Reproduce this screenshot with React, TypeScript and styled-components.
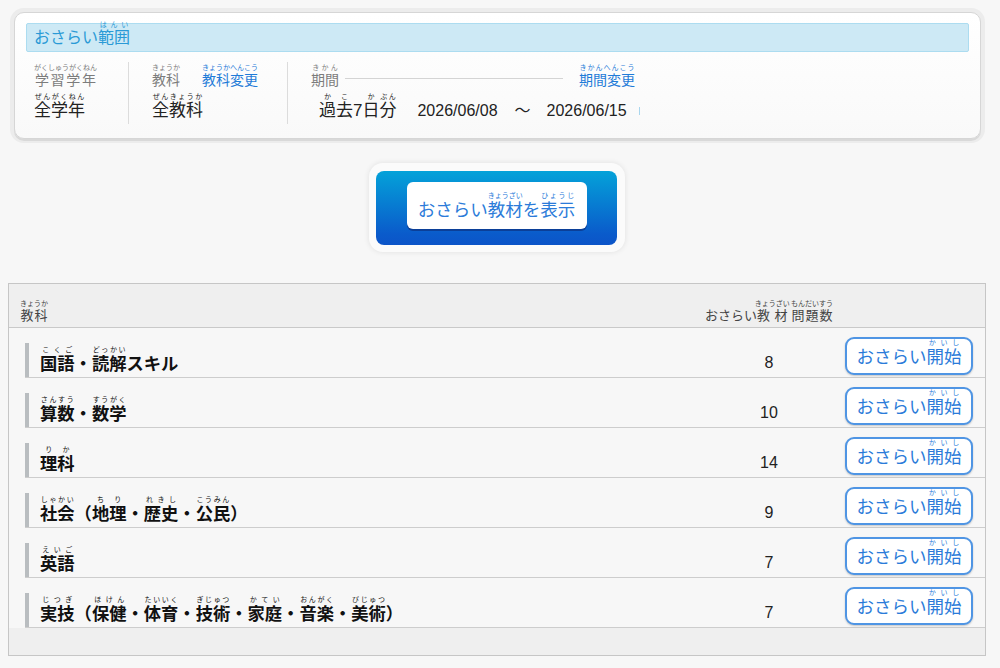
import React from 'react';
import styled, { createGlobalStyle } from 'styled-components';

const GlobalStyle = createGlobalStyle`
  html, body {
    margin: 0;
    padding: 0;
    background: #f7f7f7;
  }
  body {
    font-family: "Liberation Sans", "Noto Sans CJK JP", sans-serif;
    color: #333;
  }
  ruby {
    line-height: 1;
  }
  rt {
    font-size: 7px;
    font-weight: normal;
    line-height: 1;
    padding-bottom: 1px;
  }
`;

const Page = styled.div`
  padding: 8px 14px 11px 8px;
`;

const RangePanel = styled.section`
  margin: 0 1px 0 2px;
  padding: 4px 4px;
  background: #ececec;
  border-radius: 14px;
`;

const RangeCard = styled.div`
  background: linear-gradient(#ffffff, #f9f9f9);
  border: 1px solid #d6d6d6;
  border-radius: 10px;
  box-shadow: 0 2px 0 #d9d9d9;
  padding: 10px 11px 14px 11px;
`;

const RangeTitle = styled.h2`
  margin: 0;
  height: 29px;
  box-sizing: border-box;
  display: flex;
  align-items: flex-end;
  padding: 0 0 5px 7px;
  background: #cde9f5;
  border: 1px solid #acdcf0;
  border-radius: 2px;
  color: #2a9ad6;
  font-size: 16px;
  font-weight: normal;
  line-height: 1;
`;

const InfoRow = styled.div`
  display: flex;
  margin-top: 10px;
`;

const InfoCol = styled.div<{ $w: number; $pl: number; $last?: boolean }>`
  width: ${({ $w }) => $w}px;
  box-sizing: border-box;
  padding-left: ${({ $pl }) => $pl}px;
  border-right: ${({ $last }) => ($last ? 'none' : '1px solid #dcdcdc')};
  height: 62px;
  display: flex;
  flex-direction: column;
`;

const LabelLine = styled.div<{ $w?: number }>`
  height: 25px;
  display: flex;
  align-items: flex-end;
  width: ${({ $w }) => ($w ? `${$w}px` : 'auto')};
`;

const Label = styled.span`
  font-size: 14px;
  color: #7c7c7c;
  line-height: 1;
`;

const ChangeLink = styled.a<{ $ml?: number }>`
  font-size: 14px;
  color: #1f7bd8;
  line-height: 1;
  margin-left: ${({ $ml }) => $ml ?? 0}px;
  text-decoration: none;
  cursor: pointer;
`;

const PeriodLine = styled.span`
  flex: 1;
  height: 1px;
  background: #d4d4d4;
  margin: 0 16px 8px 6px;
`;

const ValueLine = styled.div<{ $pl?: number }>`
  height: 32px;
  display: flex;
  align-items: flex-end;
  padding-left: ${({ $pl }) => $pl ?? 0}px;
`;

const Value = styled.span<{ $ml?: number }>`
  font-size: 17px;
  color: #222;
  line-height: 1;
  margin-left: ${({ $ml }) => $ml ?? 0}px;
`;

const DateText = styled.span<{ $ml: number }>`
  font-size: 16px;
  color: #222;
  line-height: 1;
  margin-left: ${({ $ml }) => $ml}px;
`;

const Tick = styled.span`
  width: 1px;
  height: 8px;
  background: #a9d6ee;
  margin: 0 0 4px 12px;
`;

const ShowWrap = styled.div`
  display: flex;
  justify-content: center;
  margin-top: 20px;
`;

const ShowGlow = styled.div`
  padding: 8px 8px 7px 7px;
  background: #fbfbfb;
  border-radius: 14px;
  box-shadow: 0 0 5px 1px rgba(0, 0, 0, 0.07);
`;

const ShowButton = styled.button`
  width: 241px;
  height: 74px;
  box-sizing: border-box;
  border: none;
  border-radius: 8px;
  background: linear-gradient(#04a2d9, #0a5bcb 85%, #0c54c8);
  padding: 11px 0 0 0;
  display: flex;
  justify-content: center;
  align-items: flex-start;
  cursor: pointer;
`;

const ShowInner = styled.span`
  width: 180px;
  height: 47px;
  box-sizing: border-box;
  background: #ffffff;
  border-radius: 6px;
  box-shadow: 0 2px 0 #0b3f98;
  display: flex;
  justify-content: center;
  align-items: flex-end;
  padding-bottom: 10px;
  font-family: "Liberation Sans", "Noto Sans CJK JP", sans-serif;
  font-size: 17.5px;
  color: #2b7bd9;
  line-height: 1;
`;

const Table = styled.div`
  margin-top: 31px;
  border: 1px solid #c6c6c6;
  background: #f7f7f7;
`;

const HeaderRow = styled.div`
  display: grid;
  grid-template-columns: 1fr 128px 152px;
  height: 44px;
  box-sizing: border-box;
  align-items: end;
  padding: 0 0 5px 11px;
  background: #efefef;
  border-bottom: 1px solid #c9c9c9;
`;

const HeaderCell = styled.span<{ $center?: boolean }>`
  font-size: 13px;
  color: #444;
  line-height: 1;
  text-align: ${({ $center }) => ($center ? 'center' : 'left')};
  white-space: nowrap;
`;

const Row = styled.div`
  display: grid;
  grid-template-columns: 1fr 128px 152px;
  margin-left: 16px;
  height: 50px;
  box-sizing: border-box;
  border-bottom: 1px solid #cdcdcd;
  align-items: end;
`;

const SubjectCell = styled.div`
  height: 34px;
  box-sizing: border-box;
  border-left: 4px solid #b9bdc0;
  padding: 0 0 4px 11px;
  display: flex;
  align-items: flex-end;
  font-size: 17.3px;
  font-weight: bold;
  color: #111;
  line-height: 1;
  white-space: nowrap;
`;

const CountCell = styled.div`
  text-align: center;
  font-size: 16px;
  color: #222;
  line-height: 1;
  padding-bottom: 6px;
`;

const StartCell = styled.div`
  display: flex;
  justify-content: center;
  padding-bottom: 2px;
`;

const StartButton = styled.button`
  width: 128px;
  height: 38px;
  box-sizing: border-box;
  background: #ffffff;
  border: 2px solid #4f95e4;
  border-radius: 9px;
  box-shadow: 0 1px 2px rgba(0, 0, 0, 0.2);
  display: flex;
  justify-content: center;
  align-items: flex-end;
  padding: 0 0 7px 0;
  font-family: "Liberation Sans", "Noto Sans CJK JP", sans-serif;
  font-size: 17.5px;
  color: #2b7bd9;
  line-height: 1;
  cursor: pointer;
`;

const Footer = styled.div`
  height: 27px;
  background: #efefef;
`;

const R = ({ b, r }: { b: string; r: string }) => (
  <ruby>
    {b}
    <rt>{r}</rt>
  </ruby>
);

type Part = string | [string, string];

const subjects: { parts: Part[]; count: number }[] = [
  { parts: [['国語', 'こくご'], '・', ['読解', 'どっかい'], 'スキル'], count: 8 },
  { parts: [['算数', 'さんすう'], '・', ['数学', 'すうがく']], count: 10 },
  { parts: [['理科', 'りか']], count: 14 },
  {
    parts: [['社会', 'しゃかい'], '（', ['地理', 'ちり'], '・', ['歴史', 'れきし'], '・', ['公民', 'こうみん'], '）'],
    count: 9,
  },
  { parts: [['英語', 'えいご']], count: 7 },
  {
    parts: [
      ['実技', 'じつぎ'],
      '（',
      ['保健', 'ほけん'],
      '・',
      ['体育', 'たいいく'],
      '・',
      ['技術', 'ぎじゅつ'],
      '・',
      ['家庭', 'かてい'],
      '・',
      ['音楽', 'おんがく'],
      '・',
      ['美術', 'びじゅつ'],
      '）',
    ],
    count: 7,
  },
];

const App: React.FC = () => {
  return (
    <Page>
      <GlobalStyle />
      <RangePanel>
        <RangeCard>
          <RangeTitle>
            <span>
              おさらい<R b="範囲" r="はんい" />
            </span>
          </RangeTitle>
          <InfoRow>
            <InfoCol $w={103} $pl={8}>
              <LabelLine>
                <Label>
                  <R b="学習学年" r="がくしゅうがくねん" />
                </Label>
              </LabelLine>
              <ValueLine>
                <Value>
                  <R b="全学年" r="ぜんがくねん" />
                </Value>
              </ValueLine>
            </InfoCol>
            <InfoCol $w={159} $pl={23}>
              <LabelLine>
                <Label>
                  <R b="教科" r="きょうか" />
                </Label>
                <ChangeLink $ml={22}>
                  <R b="教科変更" r="きょうかへんこう" />
                </ChangeLink>
              </LabelLine>
              <ValueLine>
                <Value>
                  <R b="全教科" r="ぜんきょうか" />
                </Value>
              </ValueLine>
            </InfoCol>
            <InfoCol $w={400} $pl={23} $last>
              <LabelLine $w={324}>
                <Label>
                  <R b="期間" r="きかん" />
                </Label>
                <PeriodLine />
                <ChangeLink>
                  <R b="期間変更" r="きかんへんこう" />
                </ChangeLink>
              </LabelLine>
              <ValueLine $pl={8}>
                <Value>
                  <ruby>
                    過<rt>か</rt>去<rt>こ</rt>
                  </ruby>
                  7
                  <ruby>
                    日<rt>か</rt>分<rt>ぶん</rt>
                  </ruby>
                </Value>
                <DateText $ml={21}>2026/06/08</DateText>
                <DateText $ml={17}>～</DateText>
                <DateText $ml={16}>2026/06/15</DateText>
                <Tick />
              </ValueLine>
            </InfoCol>
          </InfoRow>
        </RangeCard>
      </RangePanel>

      <ShowWrap>
        <ShowGlow>
          <ShowButton>
            <ShowInner>
              おさらい<R b="教材" r="きょうざい" />を<R b="表示" r="ひょうじ" />
            </ShowInner>
          </ShowButton>
        </ShowGlow>
      </ShowWrap>

      <Table>
        <HeaderRow>
          <HeaderCell>
            <R b="教科" r="きょうか" />
          </HeaderCell>
          <HeaderCell $center>
            おさらい<R b="教材" r="きょうざい" /> <R b="問題数" r="もんだいすう" />
          </HeaderCell>
          <span />
        </HeaderRow>
        {subjects.map((s, i) => (
          <Row key={i}>
            <SubjectCell>
              <span>
                {s.parts.map((p, j) =>
                  typeof p === 'string' ? <React.Fragment key={j}>{p}</React.Fragment> : <R key={j} b={p[0]} r={p[1]} />
                )}
              </span>
            </SubjectCell>
            <CountCell>{s.count}</CountCell>
            <StartCell>
              <StartButton>
                おさらい<R b="開始" r="かいし" />
              </StartButton>
            </StartCell>
          </Row>
        ))}
        <Footer />
      </Table>
    </Page>
  );
};

export default App;
